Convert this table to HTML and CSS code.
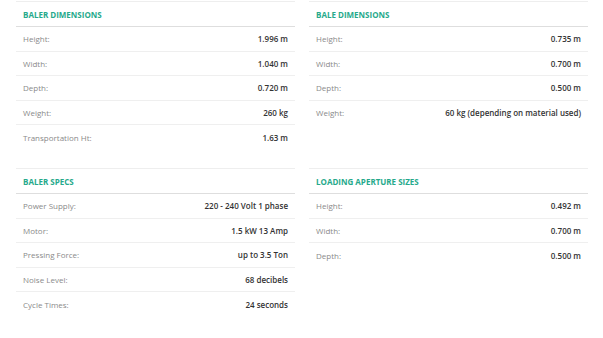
FILE: index.html
```html
<!DOCTYPE html>
<html>
<head>
<meta charset="utf-8">
<link rel="stylesheet" href="styles.css">
</head>
<body>
<div class="specs">
  <section class="spec">
    <h3 class="spec-title">Baler Dimensions</h3>
    <div class="row"><span class="label">Height:</span><span class="value">1.996 m</span></div>
    <div class="row"><span class="label">Width:</span><span class="value">1.040 m</span></div>
    <div class="row"><span class="label">Depth:</span><span class="value">0.720 m</span></div>
    <div class="row"><span class="label">Weight:</span><span class="value">260 kg</span></div>
    <div class="row"><span class="label">Transportation Ht:</span><span class="value">1.63 m</span></div>
  </section>
  <section class="spec">
    <h3 class="spec-title">Bale Dimensions</h3>
    <div class="row"><span class="label">Height:</span><span class="value">0.735 m</span></div>
    <div class="row"><span class="label">Width:</span><span class="value">0.700 m</span></div>
    <div class="row"><span class="label">Depth:</span><span class="value">0.500 m</span></div>
    <div class="row"><span class="label">Weight:</span><span class="value">60 kg (depending on material used)</span></div>
  </section>
  <section class="spec">
    <h3 class="spec-title">Baler Specs</h3>
    <div class="row"><span class="label">Power Supply:</span><span class="value">220 - 240 Volt 1 phase</span></div>
    <div class="row"><span class="label">Motor:</span><span class="value">1.5 kW 13 Amp</span></div>
    <div class="row"><span class="label">Pressing Force:</span><span class="value">up to 3.5 Ton</span></div>
    <div class="row"><span class="label">Noise Level:</span><span class="value">68 decibels</span></div>
    <div class="row"><span class="label">Cycle Times:</span><span class="value">24 seconds</span></div>
  </section>
  <section class="spec">
    <h3 class="spec-title">Loading Aperture Sizes</h3>
    <div class="row"><span class="label">Height:</span><span class="value">0.492 m</span></div>
    <div class="row"><span class="label">Width:</span><span class="value">0.700 m</span></div>
    <div class="row"><span class="label">Depth:</span><span class="value">0.500 m</span></div>
  </section>
</div>
</body>
</html>
```
FILE: styles.css
```css
* { box-sizing: border-box; }
html, body { margin: 0; padding: 0; background: #fff; }
body {
  font-family: "Open Sans", "Liberation Sans", sans-serif;
  font-size: 8px;
  padding: 1px 15px 0 16px;
}
.specs {
  display: grid;
  grid-template-columns: 279px 279px;
  column-gap: 14px;
  row-gap: 18.5px;
  align-items: start;
}
.spec {
  border-top: 1px solid #eeeeee;
}
.spec-title {
  margin: 0;
  height: 25px;
  padding: 0 7px;
  display: flex;
  align-items: center;
  border-bottom: 1px solid #dedede;
  color: #26a98b;
  font-size: 8px;
  font-weight: 700;
  text-transform: uppercase;
  letter-spacing: 0;
}
.row {
  height: 24.5px;
  padding: 0 7px;
  display: flex;
  align-items: center;
  justify-content: space-between;
  border-bottom: 1px solid #efefef;
}
.row:last-child { border-bottom: none; }
.label {
  color: #8a8a8a;
  font-weight: 400;
}
.value {
  color: #333;
  font-weight: 600;
}
```
